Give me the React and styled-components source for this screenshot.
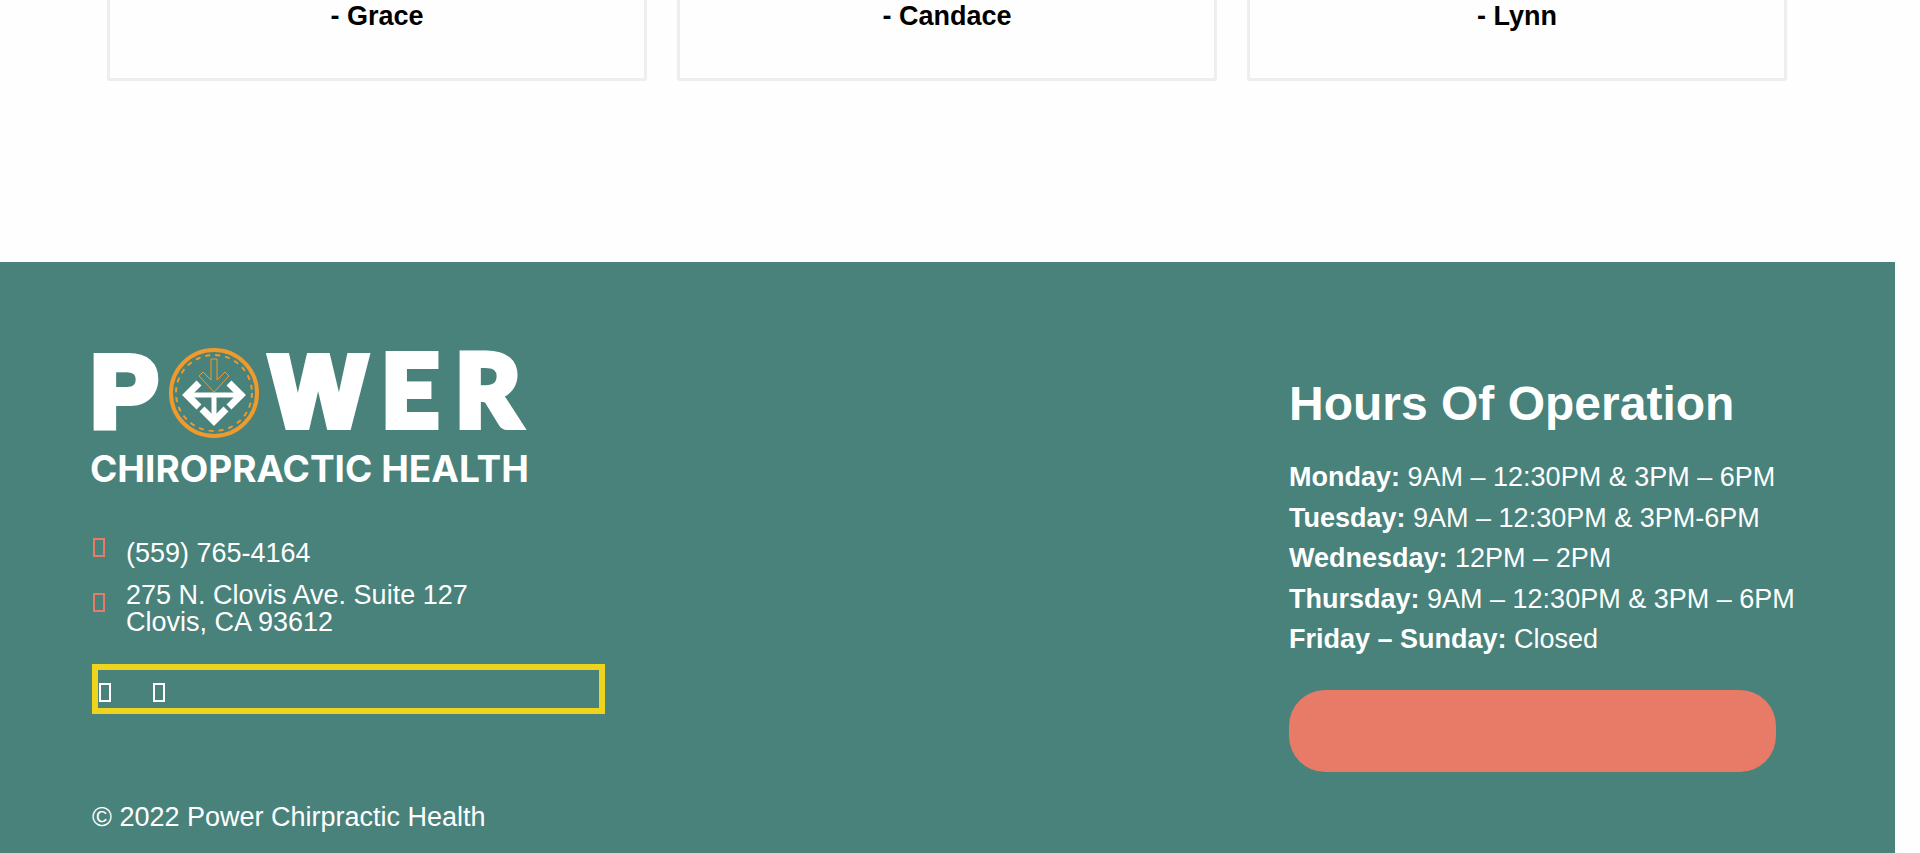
import React from 'react';
import styled, { createGlobalStyle } from 'styled-components';

const colors = {
  teal: '#48827b',
  coral: '#e77b67',
  yellow: '#f0d31c',
  orange: '#f0992c',
  border: '#eeeeee',
  white: '#ffffff',
};

const GlobalStyle = createGlobalStyle`
  * {
    box-sizing: border-box;
  }

  body {
    margin: 0;
    background: #fefefe;
    font-family: 'Liberation Sans', Arial, sans-serif;
    font-size: 27px;
    color: #000;
  }
`;

const Page = styled.div`
  padding-right: 25px;
`;

const Reviews = styled.section`
  display: grid;
  grid-template-columns: repeat(3, 1fr);
  gap: 30px;
  padding: 0 108px 181px 107px;
`;

const ReviewCard = styled.article`
  padding-bottom: 46px;
  border: 3px solid ${colors.border};
  border-top: 0;
  border-radius: 0 0 3px 3px;
  text-align: center;
`;

const ReviewAuthor = styled.h3`
  margin: 0;
  font-size: 27px;
  line-height: 32px;
`;

const Footer = styled.footer`
  display: flex;
  justify-content: space-between;
  padding: 56px 92px 24px;
  background: ${colors.teal};
  color: ${colors.white};
`;

const Brand = styled.div`
  width: 30%;
`;

const Logo = styled.svg`
  display: block;
  width: 460px;
  height: 180px;
  margin-left: -10px;
`;

const ContactList = styled.ul`
  display: grid;
  gap: 13px;
  margin: 0;
  padding: 40px 0 0;
  list-style: none;
`;

const ContactItem = styled.li`
  display: flex;
  align-items: flex-start;
  gap: 20px;
  line-height: 27px;
`;

const ContactText = styled.span`
  padding-top: 2px;
`;

const ContactLink = styled.a`
  padding-top: 2px;
  color: inherit;
  text-decoration: none;
`;

const Glyph = styled.svg`
  flex: none;
  width: 14px;
  height: 20px;
  margin-top: ${(props) => (props.$multiline ? '13px' : '0')};
  color: ${(props) => props.$color};
`;

const Socials = styled.nav`
  display: flex;
  gap: 40px;
  margin-top: 28px;
  padding: 12px 0 4px;
  border: 6px solid ${colors.yellow};
`;

const SocialLink = styled.a`
  display: flex;
  padding: 1px 0;
`;

const Copyright = styled.p`
  margin: 87px 0 0;
  line-height: 32px;
`;

const Hours = styled.div`
  width: 514px;
  padding-top: 58px;
`;

const HoursTitle = styled.h2`
  margin: 0 0 25px;
  font-size: 48px;
  line-height: 56px;
`;

const HoursList = styled.ul`
  margin: 0;
  padding: 0;
  list-style: none;
  line-height: 1.5;
  white-space: nowrap;
`;

const BookButton = styled.button`
  display: block;
  width: 487px;
  height: 82px;
  margin-top: 30px;
  border: 0;
  border-radius: 36px;
  background: ${colors.coral};
`;

const authors = ['Grace', 'Candace', 'Lynn'];

const hours = [
  { day: 'Monday', time: '9AM – 12:30PM & 3PM – 6PM' },
  { day: 'Tuesday', time: '9AM – 12:30PM & 3PM-6PM' },
  { day: 'Wednesday', time: '12PM – 2PM' },
  { day: 'Thursday', time: '9AM – 12:30PM & 3PM – 6PM' },
  { day: 'Friday – Sunday', time: 'Closed' },
];

const BoxGlyph = ({ color, multiline }) => (
  <Glyph $color={color} $multiline={multiline} viewBox="0 0 14 20" aria-hidden="true">
    <rect x="2" y="1" width="10" height="17" fill="none" stroke="currentColor" strokeWidth="2" />
  </Glyph>
);

const PowerLogo = () => (
  <Logo viewBox="-10 -30 460 180" role="img" aria-label="Power Chiropractic Health">
    <g fill={colors.white} stroke={colors.white} fontWeight="900">
      <g fontFamily="'Liberation Sans', sans-serif" fontSize="100" strokeWidth="8">
        <text x="-1" y="78">P</text>
        <text x="179" y="78">W</text>
      </g>
      <g fontFamily="Lato, sans-serif" fontSize="101" strokeWidth="6">
        <text x="289" y="79">E</text>
        <text x="363" y="79">R</text>
      </g>
    </g>
    <circle cx="122" cy="45" r="43" fill="none" stroke={colors.orange} strokeWidth="4" />
    <circle cx="122" cy="45" r="38" fill="none" stroke={colors.orange} strokeWidth="2" strokeDasharray="5 5" />
    <g fill="none" stroke={colors.white}>
      <path d="M95 47H149M122 45V74" strokeWidth="5" />
      <path d="M107 35L95 47L107 59M137 35L149 47L137 59M110 61L122 73L134 61" strokeWidth="7" />
    </g>
    <path d="M119 11h6v21l8-8 4 4-15 16-15-16 4-4 8 8z" fill={colors.teal} stroke={colors.orange} />
    <text x="-2" y="134" fill={colors.white} fontFamily="Inter, sans-serif" fontWeight="700" fontSize="37">
      CHIROPRACTIC HEALTH
    </text>
  </Logo>
);

const App = () => {
  return (
    <Page>
      <GlobalStyle />
      <Reviews>
        {authors.map((name) => (
          <ReviewCard key={name}>
            <ReviewAuthor>- {name}</ReviewAuthor>
          </ReviewCard>
        ))}
      </Reviews>

      <Footer>
        <Brand>
          <PowerLogo />
          <ContactList>
            <ContactItem>
              <BoxGlyph color={colors.coral} />
              <ContactLink href="tel:5597654164">(559) 765-4164</ContactLink>
            </ContactItem>
            <ContactItem>
              <BoxGlyph color={colors.coral} multiline />
              <ContactText>
                275 N. Clovis Ave. Suite 127
                <br />
                Clovis, CA 93612
              </ContactText>
            </ContactItem>
          </ContactList>
          <Socials>
            <SocialLink href="#facebook" aria-label="Facebook">
              <BoxGlyph color={colors.white} />
            </SocialLink>
            <SocialLink href="#instagram" aria-label="Instagram">
              <BoxGlyph color={colors.white} />
            </SocialLink>
          </Socials>
          <Copyright>© 2022 Power Chirpractic Health</Copyright>
        </Brand>

        <Hours>
          <HoursTitle>Hours Of Operation</HoursTitle>
          <HoursList>
            {hours.map(({ day, time }) => (
              <li key={day}>
                <strong>{day}:</strong> {time}
              </li>
            ))}
          </HoursList>
          <BookButton type="button" aria-label="Book an appointment" />
        </Hours>
      </Footer>
    </Page>
  );
};

export default App;
